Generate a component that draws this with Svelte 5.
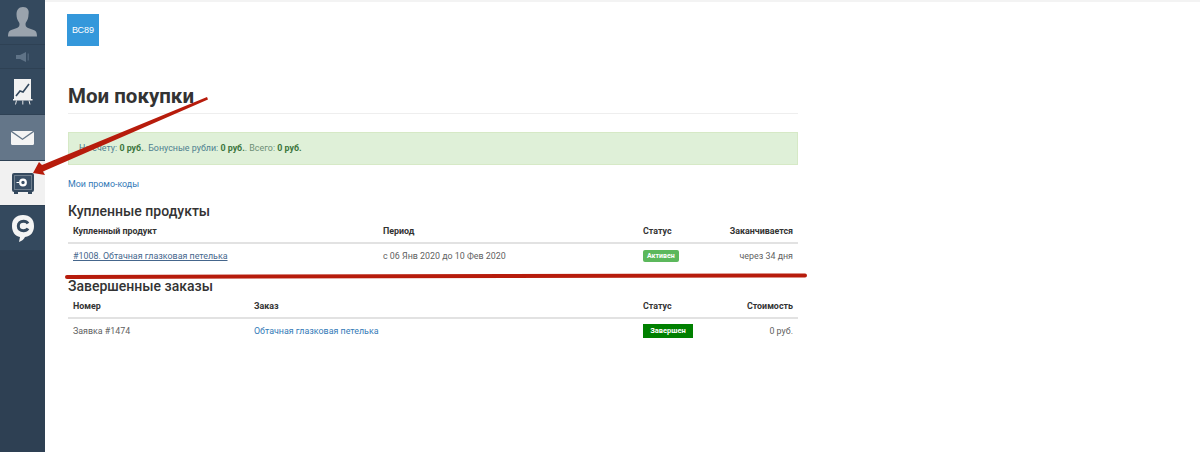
<script>
  const menu = [
    { id: 'user', h: 45 },
    { id: 'sound', h: 24 },
    { id: 'chart', h: 46 },
    { id: 'mail', h: 46 },
    { id: 'safe', h: 45 },
    { id: 'chat', h: 45 }
  ]
</script>

<div class="page">
  <nav class="sidebar">
    {#each menu as item}
      <div class="item {item.id}" style="height: {item.h}px">
        {#if item.id === 'user'}
          <svg width="30" height="30" viewBox="0 0 30 30"><path fill="#9aa3ad" d="M15 0c-4.600 0-6.500 3.400-6.500 7.500 0 3 1 6 2.600 8 .5.700.5 2.700 0 3.800-1.200 2.200-7 2.700-9.500 4.700-1 .8-1.600 3-1.600 5.500h29c0-2.500-.6-4.700-1.600-5.500-2.500-2-8.300-2.500-9.500-4.700-.5-1.100-.5-3.100 0-3.800 1.600-2 2.600-5 2.600-8C21.500 3.400 19.600 0 15 0z"/></svg>
        {:else if item.id === 'sound'}
          <svg width="14" height="10" viewBox="0 0 14 10"><path fill="#5f7387" d="M0 3h4l6-3v10L4 7H0z"/><rect x="11.500" y="1.500" width="1.500" height="7" fill="#4d6277"/></svg>
        {:else if item.id === 'chart'}
          <svg width="20" height="26" viewBox="0 0 20 26"><rect x="1" y="0" width="17" height="20" fill="#f2f2f2"/><path d="M3 17l4-5 3 1 6-8" fill="none" stroke="#34495e" stroke-width="1.600"/><rect x="0" y="20" width="19.500" height="1.500" fill="#f2f2f2"/><path d="M3.500 21.500l-1 4M9.800 21.500v4M16 21.500l1 4" stroke="#e4e6e8" stroke-width="1"/></svg>
        {:else if item.id === 'mail'}
          <svg width="23" height="14" viewBox="0 0 23 14"><path fill="#f4f4f4" d="M1 0h21l-10.500 7.500z"/><path fill="#f4f4f4" d="M0 1v12l.8 1h21.400l.8-1V1l-11.500 8z"/></svg>
        {:else if item.id === 'safe'}
          <svg width="22" height="21" viewBox="0 0 22 21"><rect x="0" y="0" width="22" height="19" rx="2" fill="#34495e"/><rect x="2" y="2" width="18" height="15" fill="#6f7f8f"/><rect x="3" y="3" width="16" height="13" fill="#3a5067"/><circle cx="11" cy="9.500" r="2.800" fill="none" stroke="#fff" stroke-width="2.200"/><rect x="4.500" y="9" width="2.500" height="1" fill="#fff"/><rect x="2" y="19" width="4" height="2" fill="#34495e"/><rect x="16" y="19" width="4" height="2" fill="#34495e"/></svg>
        {:else}
          <svg width="24" height="29" viewBox="0 0 24 29"><path fill="#f4f4f4" d="M12 1C5 1 1 5 1 12c0 6 3 10 8 11l-1 5c3-1 5-3 6-5 6-1 9-5 9-11C23 5 19 1 12 1z"/><path d="M17 9.500c-1-1.600-2.600-2.200-4.500-2.200-3.200 0-5.200 1.900-5.200 4.700s2 4.700 5.200 4.700c1.900 0 3.500-.6 4.500-2.200" fill="none" stroke="#34495e" stroke-width="3"/></svg>
        {/if}
      </div>
    {/each}
  </nav>

  <main class="content">
    <div class="inner">
      <div class="badge-box">ВС89</div>
      <h1>Мои покупки</h1>

      <div class="alert">
        <span class="blue">На счету:</span> <b>0 руб.</b><span class="blue">. Бонусные рубли:</span> <b>0 руб.</b><span class="grey">. Всего:</span> <b>0 руб.</b>
      </div>

      <a class="promo" href="#promo">Мои промо-коды</a>

      <h2>Купленные продукты</h2>
      <div class="row head bought">
        <span>Купленный продукт</span><span>Период</span><span>Статус</span><span class="end">Заканчивается</span>
      </div>
      <div class="row body bought">
        <a class="under" href="#p">#1008. Обтачная глазковая петелька</a>
        <span>с 06 Янв 2020 до 10 Фев 2020</span>
        <span><em class="label active">Активен</em></span>
        <span class="end">через 34 дня</span>
      </div>

      <h2 class="second">Завершенные заказы</h2>
      <div class="row head orders">
        <span>Номер</span><span>Заказ</span><span>Статус</span><span class="end">Стоимость</span>
      </div>
      <div class="row body orders">
        <span>Заявка #1474</span>
        <a href="#o">Обтачная глазковая петелька</a>
        <span><em class="label done">Завершен</em></span>
        <span class="end">0 руб.</span>
      </div>
    </div>
  </main>

  <svg class="marks" width="1200" height="452" viewBox="0 0 1200 452">
    <path fill="#b71c0c" d="M207 97L42 165l-3-3-6 11 12 2-2-3.500L208 99.500z"/>
    <path d="M67 277L805 275.500" fill="none" stroke="#b71c0c" stroke-width="4" stroke-linecap="round"/>
  </svg>
</div>

<style>
  :global(body) {
    margin: 0;
    background: #fff;
  }

  .page {
    display: flex;
    position: relative;
    height: 452px;
    overflow: hidden;
    font-family: Roboto, "Liberation Sans", sans-serif;
    font-size: 8.900px;
    color: #5f5f5f;
  }

  .sidebar {
    width: 45px;
    flex: none;
    background: #2e4053;
  }

  .item {
    display: flex;
    align-items: center;
    justify-content: center;
    background: #34495e;
    border-bottom: 1px solid #2e4154;
    box-sizing: border-box;
  }

  .item.mail {
    background: #647689;
  }

  .item.safe {
    background: #f1f1f1;
  }

  .content {
    flex: 1;
    border-top: 2px solid #f3f3f3;
    padding: 12px 0 0 23px;
  }

  .inner {
    width: 730px;
  }

  .badge-box {
    width: 32px;
    height: 32px;
    margin-left: -1px;
    background: #3498db;
    color: #fff;
    font-family: "Liberation Sans", sans-serif;
    font-size: 9px;
    display: flex;
    align-items: center;
    justify-content: center;
  }

  h1 {
    margin: 36px 0 0;
    padding-bottom: 3px;
    font-size: 20.500px;
    line-height: 28px;
    font-weight: 700;
    color: #333;
    border-bottom: 1px solid #eee;
  }

  .alert {
    margin-top: 18px;
    height: 33px;
    padding-left: 10px;
    line-height: 31px;
    background: #dff0d8;
    border: 1px solid #d6e9c6;
    box-sizing: border-box;
    color: #3c763d;
  }

  .blue {
    color: #4d7f8f;
  }

  .grey {
    color: #6d8f76;
  }

  .promo {
    display: block;
    margin-top: 13px;
    line-height: 12px;
  }

  a {
    color: #337ab7;
    text-decoration: none;
  }

  a.under {
    color: #45668c;
    text-decoration: underline;
  }

  h2 {
    margin: 12px 0 0;
    font-size: 14px;
    line-height: 18px;
    font-weight: 500;
    color: #333;
  }

  h2.second {
    margin-top: 9px;
  }

  .row {
    display: grid;
    padding: 0 5px;
    align-items: center;
  }

  .bought {
    grid-template-columns: 310px 260px 1fr 100px;
  }

  .orders {
    grid-template-columns: 181px 389px 1fr 100px;
  }

  .head {
    height: 24px;
    padding-bottom: 1px;
    font-weight: 700;
    color: #333;
    border-bottom: 2px solid #e2e2e2;
    box-sizing: border-box;
  }

  .head.orders {
    padding-bottom: 0;
  }

  .body {
    height: 24px;
    padding-bottom: 1px;
    box-sizing: border-box;
  }

  .end {
    text-align: right;
  }

  .label {
    display: inline-block;
    font-style: normal;
    font-weight: 700;
    font-size: 7px;
    color: #fff;
    line-height: 12px;
    vertical-align: middle;
  }

  .active {
    background: #5cb85c;
    padding: 0 4px;
    border-radius: 2px;
  }

  .done {
    background: #008000;
    width: 50px;
    text-align: center;
    line-height: 14px;
    font-size: 7.500px;
  }

  .marks {
    position: absolute;
    left: 0;
    top: 0;
    pointer-events: none;
  }
</style>
